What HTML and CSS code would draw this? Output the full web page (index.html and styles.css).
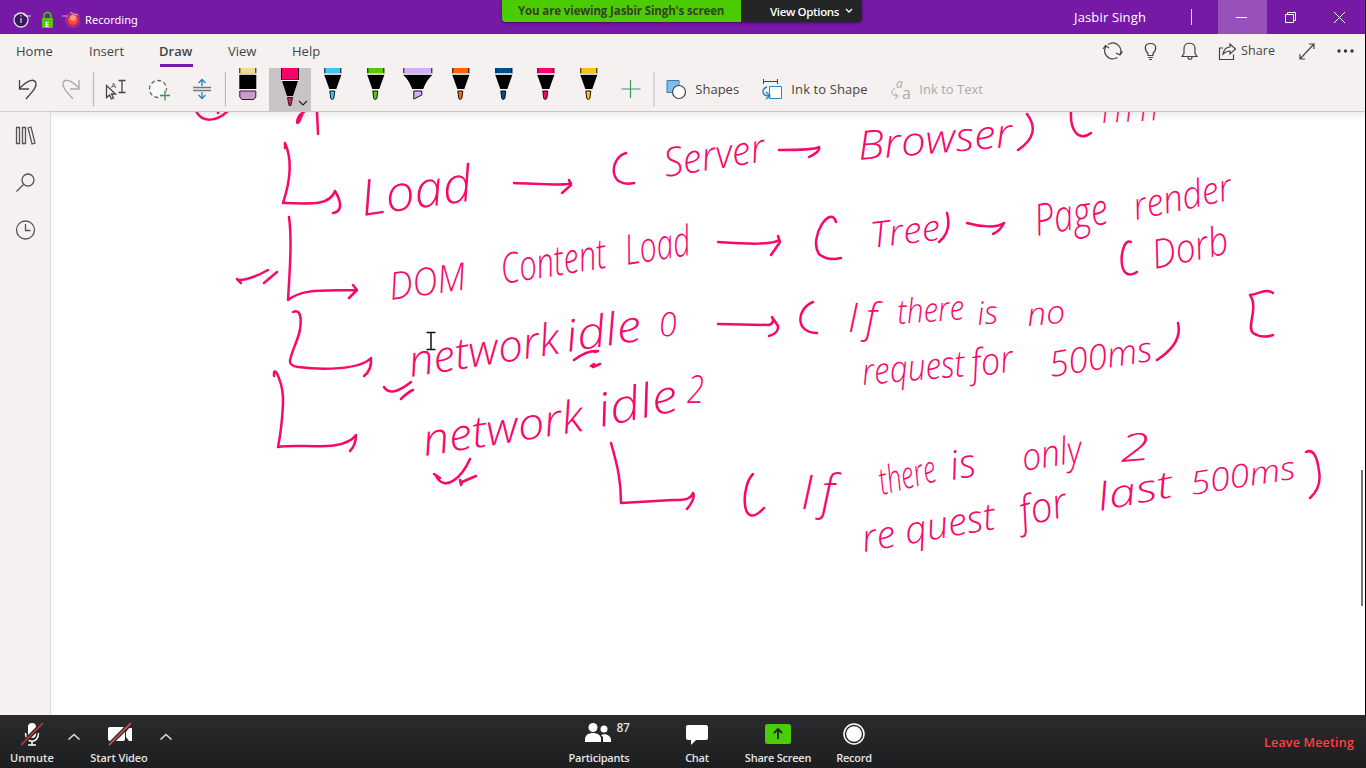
FILE: index.html
```html
<!DOCTYPE html>
<html lang="en">
<head>
<meta charset="utf-8">
<title>Meeting - shared notebook</title>
<link rel="stylesheet" href="styles.css">
</head>
<body>
<div class="screen">
<svg class="defs" width="0" height="0">
  <symbol id="pen" viewBox="0 0 42 43">
    <path d="M13 0h17v6H13z" fill="currentColor"/><path d="M13.500 0v5M29.500 0v5" stroke="#111"/>
    <path d="M13 5h17v2H13z" fill="#ccc"/><path d="M13 7h17l-5 14h-7z" fill="#000"/>
    <path d="M18.500 23h5l-1 7.500q-1.500 2-3 0z" fill="currentColor" stroke="#111"/>
  </symbol>
</svg>
<header class="titlebar">
  <div class="status">
    <svg width="80" height="34" viewBox="0 0 80 34">
      <circle cx="21" cy="20" r="7" fill="#3a1762" stroke="#ddd" stroke-width="1.300"/><path d="M21 18v5M21 15v1.500" stroke="#aaa" stroke-width="1.700"/><path d="M14 16l6-3M22 13l3 3h6" stroke="#ddd" fill="none"/>
      <path d="M44 19v-3a3.500 3.500 0 0 1 7 0v3" fill="none" stroke="#4bcc08" stroke-width="1.600"/><rect x="42" y="18" width="11" height="10" rx="1" fill="#4bcc08"/>
      <text class="lock-label" x="45" y="26.500">E</text>
      <circle cx="73" cy="20" r="8" fill="#cf3668" opacity=".55"/><circle cx="73" cy="20" r="5" fill="#ff4a37"/><circle cx="73" cy="18" r="3" fill="#ff9b82"/><path d="M62 16h6M70 12l3 2 5 1" fill="none" stroke="#c9a5df"/>
    </svg>
    <span class="recording">Recording</span>
  </div>
  <div class="banner"><div class="viewing">You are viewing Jasbir Singh's screen</div><div class="options">View Options <svg width="8" height="6"><path d="M1 1l3 3 3-3" fill="none" stroke="#fff" stroke-width="1.300"/></svg></div></div>
  <div class="window-tools"><span class="user">Jasbir Singh</span><i class="caret"></i>
    <span class="minimize"><svg width="49" height="34"><path d="M18 17.500h11" stroke="#fff"/></svg></span>
    <svg width="49" height="34"><path d="M18.500 14.500h8v8h-8zM20.500 14v-1.500h8v8H27" fill="none" stroke="#fff"/></svg>
    <svg width="49" height="34"><path d="M18 12l11 11M29 12L18 23" stroke="#fff"/></svg>
  </div>
</header>
<nav class="tabs">
  <span class="tab home">Home</span><span class="tab insert">Insert</span><span class="tab draw">Draw</span><span class="tab view">View</span><span class="tab help">Help</span>
  <div class="actions">
    <svg width="138" height="34" viewBox="1100 34 138 34" fill="none" stroke="#444" stroke-width="1.200">
      <path d="M1110 43.500a8 8 0 0 1 10 11M1115 58.500a8 8 0 0 1-9-12M1103 49l2.500-3.500 3.500 2.500M1116 53l4 2 2.500-3.500M1108 44.500l2-1M1115 58.500l2.500-1"/>
      <path d="M1148 55.500v-2c-4-4-4-10 2.500-10s6.500 6 2.500 10v2zM1148 57.500h5M1149 59.500h3"/>
      <path d="M1182 56.500h15l-2-3v-5c0-7-11-7-11 0v5zM1188 57c0 3 4 3 4 0"/>
      <path d="M1223 48h-3.500v11.500h14v-5M1223 54c1-5 4-7 7-7v-3l5.500 5-5.500 5v-3c-3 0-5 1-7 3z"/>
    </svg>
    <span class="share">Share</span>
    <svg class="more" width="70" height="34" viewBox="1295 34 70 34"><path d="M1300 59l14-15M1309 44h5v5M1300 54v5h5" fill="none" stroke="#444" stroke-width="1.200"/><g fill="#333"><circle cx="1339" cy="51" r="1.700"/><circle cx="1345.500" cy="51" r="1.700"/><circle cx="1352" cy="51" r="1.700"/></g></svg>
  </div>
</nav>
<section class="tools">
  <svg width="226" height="43" viewBox="0 68 226 43" fill="none" stroke="#444" stroke-width="1.300">
    <path d="M19.500 80v9H29M20 88c8-8 14-10 16-5 1 5-5 10-10 16"/>
    <path d="M79 80v9H70M79 88c-8-8-14-10-16-5-1 5 5 10 10 16" stroke="#aaa"/>
    <path d="M93.500 72.500v34M225.500 72.500v34" stroke="#bbb"/>
    <path d="M106.500 85.500v12l3-2.500 2 4 2-1-2-4h4z" fill="#f5f1f0"/><path d="M118.500 80.500h7M122 80.500v12M118.500 92.500h7"/><text class="letter-icon" x="111" y="88">A</text>
    <circle cx="158" cy="89" r="8.500" stroke-dasharray="4 2.500" fill="#fafafa" stroke="#666"/><path d="M159 95.500h11M164.500 90v11" stroke="#f5f1f0" stroke-width="4"/><path d="M160 95.500h10M165 90.500v10" stroke="#37985e"/>
    <path d="M193 87.500h18M193 90.500h18" stroke="#777"/><path d="M202 86v-6M198.500 83l3.500-3.500 3.500 3.500M202 92v7M198.500 95l3.500 3.500 3.500-3.500" stroke="#2d7fc1"/>
  </svg>
  <svg class="pen-slot" viewBox="0 0 42 43"><path d="M13 0h17v6H13z" fill="#f3dc91"/><path d="M13.500 0v5M29.500 0v5" stroke="#111"/><path d="M13 5h17v2H13z" fill="#ccc"/><path d="M13 7h17v14H13z"/><path d="M13.500 23h16v6l-2 2.500h-12l-2-2.500z" fill="#cc98d3" stroke="#222"/></svg>
  <div class="selected-pen"><svg width="42" height="43"><path d="M12.500 0v12h17V0" fill="#ff0069" stroke="#111"/><path d="M12 12.500h18" stroke="#fff"/><path d="M13 13h16l-5 15h-6z"/><path d="M18.500 29.500h5l-1.500 8h-2z" fill="#dd1752" stroke="#222"/><path d="M30 33l4 4 4-4" fill="none" stroke="#222" stroke-width="1.200"/></svg></div>
  <svg class="pen-slot cyan"><use href="#pen"/></svg><svg class="pen-slot green"><use href="#pen"/></svg>
  <svg class="pen-slot" viewBox="0 0 42 43"><path d="M7 0h29v6H7z" fill="#d5adff"/><path d="M7.500 0v5M35.500 0v5" stroke="#111"/><path d="M7 5h29v2H7z" fill="#ccc"/><path d="M7 7h29c-6 6-7 9-9 14H16C14 16 12 12 7 7z"/><path d="M17.500 23h8v4l-8 4z" fill="#d5adff" stroke="#111"/></svg>
  <svg class="pen-slot orange"><use href="#pen"/></svg><svg class="pen-slot blue"><use href="#pen"/></svg><svg class="pen-slot pink"><use href="#pen"/></svg><svg class="pen-slot yellow"><use href="#pen"/></svg>
  <svg class="shape-icons" width="86" height="43" viewBox="609 68 86 43" fill="none"><path d="M621.500 89h19M630.500 80v18" stroke="#37985e" stroke-width="1.200"/><path d="M654 72.500v34" stroke="#bbb"/><path d="M667 80.500h12v12h-12z" fill="#83bdeb" stroke="#377dad"/><circle cx="679" cy="92" r="6.500" fill="#fff" stroke="#444" stroke-width="1.200"/></svg>
  <span class="tool-label shapes">Shapes</span>
  <svg width="30" height="43" viewBox="761 68 30 43" fill="none" stroke="#444"><path d="M763 81.500h15M763.500 79v5M777.500 79v5"/><path d="M769.500 86.500h12v12h-12z" fill="#fff" stroke="#2488c5"/><path d="M767 87c-6 2-5 9 2 9M766 92l4 4-4 3" stroke="#2488c5" stroke-width="1.400"/></svg>
  <span class="tool-label ink-shape">Ink to Shape</span>
  <svg width="28" height="43" viewBox="890 68 28 43"><path d="M895 88c-5 3-4 8 3 8M895 93l3 3-3 3" fill="none" stroke="#aaa"/><text class="a-top" x="896" y="88">a</text><text class="a-bottom" x="902" y="99">a</text></svg>
  <span class="tool-label disabled">Ink to Text</span>
</section>
<main class="workspace">
  <aside class="rail"><svg width="50" height="145" viewBox="0 112 50 145" fill="none" stroke="#555" stroke-width="1.300"><path d="M16.500 127.500h3v16h-3zM22.500 127.500h3v16h-3zM28 128l3-1 4 16-3 1z"/><circle cx="28" cy="180" r="6"/><path d="M23.500 184.500l-7 7"/><circle cx="25.500" cy="230" r="9"/><path d="M25.500 224v6.500h5"/></svg></aside>
  <div class="canvas">
    <svg class="ink" viewBox="51 112 1314 603">
      <g class="strokes">
        <path d="M196 111c6 12 20 11 32 0M218 112v1M303 112q-5 14-6 10 1-7 7-10M317 112l1 22"/>
        <path d="M285 148v-5c9 20 4 42-2 60 31 1 47 2 52-12 8 13 6 21-2 22"/>
        <path d="M289 217c3 21 1 51-1 83 15-12 37-9 67-10M353 285l4 5-8 8"/>
        <path d="M293 312c10-5 9 15 4 28-8 21-11 25 1 27 23 3 62 3 73-9q1 12-7 18"/>
        <path d="M274 376c-1-14 10 7 9 28-1 21-3 33-5 43 23-4 65 6 78-12q0 10-6 16"/>
        <path d="M611 443c7 24 10 39 10 60l52-3q18 1 20-7 3 5-6 16"/>
        <path d="M514 183c29 1 53 3 57 0M569 180l2 5-9 8M779 150c17 0 37 0 40-3q2 4-10 10M718 242c31 2 53 3 61-2M778 236l2 6-9 13M967 223c13 4 31 5 37 0M1004 223q-4 8-11 11M718 324l51 1q6-2 3-8l6 9q1 7-9 10"/>
        <path d="M626 153c-17 5-18 36 8 30M1027 114q15 20-9 36M1071 112c-1 19 8 30 20 21M836 222c-5-18-28 15-17 32q8 7 22 4M947 213q5 18-8 29M1131 242c-11-6-16 44 6 30M813 302c-17 7-18 31 4 31M1178 323q5 20-21 37M753 474c-12 11-13 60 11 34M1306 452q10-5 13 19 3 16-9 27"/>
        <path d="M1273 293c-7-5-14 1-23 2 9 13-4 32 3 38q9 6 20 2"/>
        <path d="M237 279l4 4-2-3q11 0 29-10M264 283l13-11M384 387q7 11 27-5M401 399q7-7 12-9M574 360q13-10 24-9l-3 1M591 366l3-2-1 3 7-3M434 474l6 4-4-2c9 17 26 1 34-17M460 480l1 5 1-3 14-6"/>
      </g>
      <g class="handwriting">
        <text transform="translate(363 216) rotate(-8)" textLength="112" lengthAdjust="spacingAndGlyphs" font-size="50">Load</text>
        <text transform="translate(666 177) rotate(-9)" textLength="102" lengthAdjust="spacingAndGlyphs" font-size="40">Server</text>
        <text transform="translate(859 160) rotate(-5)" textLength="155" lengthAdjust="spacingAndGlyphs" font-size="40">Browser</text>
        <text transform="translate(1102 123) rotate(-3)" textLength="66" lengthAdjust="spacingAndGlyphs" font-size="36">HTTP</text>
        <text transform="translate(872 248) rotate(-7)" textLength="70" lengthAdjust="spacingAndGlyphs" font-size="36">Tree</text>
        <text transform="translate(1037 236) rotate(-10)" textLength="74" lengthAdjust="spacingAndGlyphs" font-size="44">Page</text>
        <text transform="translate(1136 220) rotate(-12)" textLength="100" lengthAdjust="spacingAndGlyphs" font-size="38">render</text>
        <text transform="translate(1155 269) rotate(-12)" textLength="77" lengthAdjust="spacingAndGlyphs" font-size="40">Dorb</text>
        <text transform="translate(391 300) rotate(-8)" textLength="77" lengthAdjust="spacingAndGlyphs" font-size="38">DOM</text>
        <text transform="translate(503 284) rotate(-9)" textLength="106" lengthAdjust="spacingAndGlyphs" font-size="42">Content</text>
        <text transform="translate(627 265) rotate(-9)" textLength="66" lengthAdjust="spacingAndGlyphs" font-size="42">Load</text>
        <text transform="translate(411 377) rotate(-9)" textLength="152" lengthAdjust="spacingAndGlyphs" font-size="44">network</text>
        <text transform="translate(568 352) rotate(-9)" textLength="76" lengthAdjust="spacingAndGlyphs" font-size="44">idle</text>
        <text transform="translate(660 337) rotate(-6)" font-size="33">0</text>
        <text transform="translate(425 456) rotate(-9)" textLength="162" lengthAdjust="spacingAndGlyphs" font-size="44">network</text>
        <text transform="translate(601 427) rotate(-12)" textLength="81" lengthAdjust="spacingAndGlyphs" font-size="46">idle</text>
        <text transform="translate(687 403)" font-size="38" textLength="17" lengthAdjust="spacingAndGlyphs">2</text>
        <text transform="translate(848 332)" font-size="40" textLength="29" lengthAdjust="spacing">If</text>
        <text transform="translate(898 324) rotate(-4)" textLength="67" lengthAdjust="spacingAndGlyphs" font-size="34">there</text>
        <text transform="translate(978 325) rotate(-5)" font-size="32">is</text>
        <text transform="translate(1028 326) rotate(-5)" textLength="38" lengthAdjust="spacingAndGlyphs" font-size="32">no</text>
        <text transform="translate(863 385) rotate(-5)" textLength="103" lengthAdjust="spacingAndGlyphs" font-size="37">request</text>
        <text transform="translate(973 377) rotate(-8)" textLength="42" lengthAdjust="spacingAndGlyphs" font-size="38">for</text>
        <text transform="translate(1051 377) rotate(-9)" textLength="104" lengthAdjust="spacingAndGlyphs" font-size="35">500ms</text>
        <text transform="translate(801 509)" font-size="48" textLength="34" lengthAdjust="spacing">If</text>
        <text transform="translate(882 495) rotate(-14)" textLength="58" lengthAdjust="spacingAndGlyphs" font-size="38">there</text>
        <text transform="translate(952 480) rotate(-10)" font-size="40">is</text>
        <text transform="translate(1024 471) rotate(-9)" textLength="60" lengthAdjust="spacingAndGlyphs" font-size="38">only</text>
        <text transform="translate(1121 462) rotate(-5)" font-size="38" textLength="30" lengthAdjust="spacingAndGlyphs">2</text>
        <text transform="translate(864 552) rotate(-10)" textLength="135" lengthAdjust="spacingAndGlyphs" font-size="38">re quest</text>
        <text transform="translate(1023 527) rotate(-14)" textLength="48" lengthAdjust="spacingAndGlyphs" font-size="42">for</text>
        <text transform="translate(1100 511) rotate(-11)" textLength="76" lengthAdjust="spacingAndGlyphs" font-size="38">last</text>
        <text transform="translate(1192 495) rotate(-9)" textLength="106" lengthAdjust="spacingAndGlyphs" font-size="32">500ms</text>
      </g>
      <path class="cursor" d="M426.500 332.500h9M431 333v16M426.500 349.500h9"/>
      <path class="scroll" d="M1362 470v136"/>
    </svg>
  </div>
</main>
<footer class="meeting">
  <div class="control unmute"><svg width="34" height="34" viewBox="15 715 34 34"><rect x="28" y="723" width="8" height="15" rx="4" fill="#fff"/><path d="M25.500 733c0 11 13 11 13 0M32 741v4M28 745h8" fill="none" stroke="#fff" stroke-width="1.500"/><path d="M21 745l22-22" stroke="#292b2c" stroke-width="4"/><path d="M21 745l22-22" stroke="#de3030" stroke-width="1.500"/></svg><span>Unmute</span></div>
  <svg class="chevron first" width="14" height="8"><path d="M1.500 6.500l5.500-5 5.500 5"/></svg>
  <div class="control video"><svg width="34" height="34" viewBox="102 715 34 34"><rect x="108" y="727" width="17" height="14" rx="2" fill="#fff"/><path d="M126 732l3-4h3v13h-3l-3-4z" fill="#fff"/><path d="M109 745l22-22" stroke="#292b2c" stroke-width="4"/><path d="M109 745l22-22" stroke="#f05050" stroke-width="1.500"/></svg><span>Start Video</span></div>
  <svg class="chevron second" width="14" height="8"><path d="M1.500 6.500l5.500-5 5.500 5"/></svg>
  <div class="control participants"><svg width="80" height="34" viewBox="558 715 80 34"><g fill="#fff"><circle cx="592" cy="727.500" r="4.500"/><path d="M584 742v-3c0-8 16-8 16 0v3z"/><circle cx="603" cy="729" r="3.500"/><path d="M602 742v-5l-2-2c5-2 10 1 10 5v2z"/></g><text class="count" x="615.500" y="732">87</text></svg><span>Participants</span></div>
  <div class="control chat"><svg width="34" height="34" viewBox="680 715 34 34"><path d="M688 725h18q2 0 2 2v11q0 2-2 2h-10l-5 5v-5h-3q-2 0-2-2v-11q0-2 2-2z" fill="#fff"/></svg><span>Chat</span></div>
  <div class="control sharing"><svg width="34" height="34" viewBox="761 715 34 34"><rect x="765" y="724" width="26" height="20" rx="2.500" fill="#4bcc08"/><path d="M778 739v-9M774 733l4-4 4 4" fill="none" stroke="#222" stroke-width="1.800"/></svg><span>Share Screen</span></div>
  <div class="control record"><svg width="34" height="34" viewBox="837 715 34 34"><circle cx="854" cy="734" r="10" fill="none" stroke="#fff" stroke-width="1.500"/><circle cx="854" cy="734" r="7.800" fill="#fff"/></svg><span>Record</span></div>
  <span class="leave">Leave Meeting</span>
</footer>
</div>
</body>
</html>
```
FILE: styles.css
```css
* { box-sizing: border-box; }
body { margin: 0; overflow: hidden; font-family: "Open Sans", "Noto Sans", sans-serif; background: #000; }
svg { display: block; flex: none; }
.defs { position: absolute; }
.screen { width: 1366px; height: 768px; display: flex; flex-direction: column; }
.titlebar { height: 34px; flex: none; display: grid; grid-template-columns: 502px 360px 1fr; background: #7719a7; color: #fff; margin-right: 1px; }
.status { display: flex; }
.recording { font-family: "Noto Sans", sans-serif; font-size: 11px; line-height: 15px; margin: 12px 0 0 5px; letter-spacing: .05px; }
.lock-label { font: bold 7px "Open Sans", sans-serif; fill: #fff; }
.banner { height: 22px; display: flex; border-radius: 0 0 4px 4px; overflow: hidden; box-shadow: 0 1px 3px #3b0c59; line-height: 21px; white-space: nowrap; }
.viewing { width: 239px; padding-left: 16px; background: #4bcc00; color: #344029; font-weight: 700; font-size: 11.500px; letter-spacing: -.12px; }
.options { flex: 1; display: flex; align-items: center; gap: 6px; padding-left: 29px; background: #232527; font-size: 11.500px; font-weight: 600; letter-spacing: -.35px; }
.window-tools { display: flex; }
.user { margin-left: 212px; width: 117px; font-size: 13px; line-height: 34px; letter-spacing: .15px; white-space: nowrap; }
.caret { width: 1px; height: 16px; margin: 9px 26px 0 0; background: #ddd; }
.minimize { background: #9850bb; }
.tabs { height: 34px; flex: none; display: flex; background: #f5f1f0; margin-right: 1px; padding-left: 16px; color: #444; font-size: 13px; line-height: 34px; white-space: nowrap; }
.home { width: 73px; } .insert { width: 70px; } .draw { width: 69px; font-weight: 600; } .view { width: 64px; } .help { width: 60px; }
.draw::after { content: ""; display: block; width: 33px; height: 3px; margin: -4px 0 0 1px; background: #7719a7; }
.actions { display: flex; margin-left: auto; }
.share { width: 57px; padding-left: 3px; font-size: 12.500px; letter-spacing: .1px; }
.tools { height: 43px; flex: none; display: flex; background: #f5f1f0; margin-right: 1px; color: #444; }
.pen-slot { width: 42.600px; height: 43px; }
.pen-slot use { width: 42px; height: 43px; }
.selected-pen { width: 42.600px; background: linear-gradient(90deg, #c8c4c4 42px, transparent 42px); }
.cyan { color: #3fc4fa; } .green { color: #5bc800; } .orange { color: #ff6508; } .blue { color: #004f8b; } .pink { color: #ff006e; } .yellow { color: #ffc114; }
.letter-icon { font: 8px "Open Sans", sans-serif; stroke: none; fill: #444; }
.tool-label { font-size: 13px; line-height: 43px; white-space: nowrap; }
.shapes { width: 66px; } .ink-shape { width: 99px; letter-spacing: .1px; } .disabled { color: #aaa; padding-left: 1px; }
.a-top, .a-bottom { font-family: "Open Sans", sans-serif; font-size: 12px; fill: #aaa; } .a-top { font-style: italic; } .a-bottom { font-size: 16px; }
.workspace { display: flex; height: 604px; flex: none; margin-right: 1px; }
.rail { width: 51px; background: #f5f1f0; border-right: 1px solid #ddd; border-top: 1px solid #d2cece; }
.canvas { width: 1314px; background: linear-gradient(#ededed, #fff 8px); border-top: 1px solid #c9c6c6; }
.ink { width: 1314px; height: 603px; overflow: hidden; }
.strokes { fill: none; stroke: #f7096a; stroke-width: 2.500px; stroke-linecap: round; stroke-linejoin: round; }
.handwriting { font-family: "Open Sans", sans-serif; font-style: italic; font-weight: 300; fill: #f7096a; }
.cursor { fill: none; stroke: #111; stroke-width: 1.500px; }
.scroll { stroke: #777; stroke-width: 2px; }
.meeting { flex: 1; display: flex; background: linear-gradient(#292b2c, #1c1d1f); color: #e4e4e4; font-size: 11px; font-weight: 600; letter-spacing: -.25px; white-space: nowrap; }
.control { display: flex; flex: none; flex-direction: column; align-items: center; }
.control span { line-height: 18px; }
.unmute { width: 64px; letter-spacing: .15px; }
.chevron { fill: none; stroke: #ddd; stroke-width: 1.600px; width: 22px; padding-left: 0; margin: 18px 0 0 3px; }
.chevron { width: 14px; }
.first { margin-left: 3px; }
.video { width: 78px; margin-left: -1px; letter-spacing: -.1px; }
.second { margin-left: 1px; }
.participants { margin-left: 386px; width: 80px; }
.chat { width: 70px; margin-left: 23px; } .sharing { width: 80px; margin-left: 6px; } .record { width: 66px; margin-left: 3px; }
.count { font: 600 12px "Open Sans", sans-serif; fill: #ddd; }
.leave { margin: 0 12px 0 auto; color: #ff4242; font-size: 12.500px; line-height: 55px; letter-spacing: .18px; }
```
